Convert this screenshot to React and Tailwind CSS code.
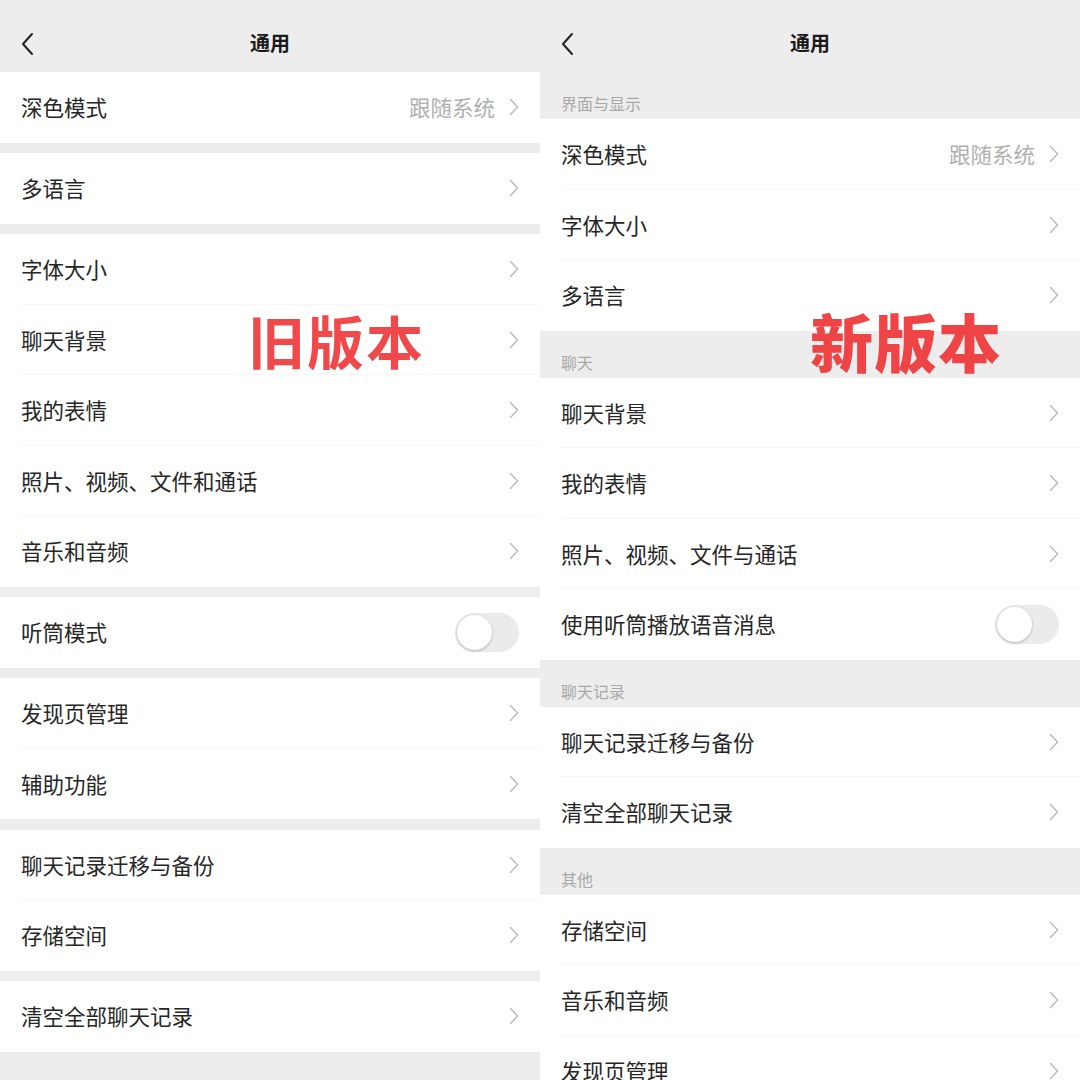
const font = { fontFamily: '"Noto Sans CJK SC", "Noto Sans", sans-serif' };

const Chevron = () => (
  <svg width="10" height="18" viewBox="0 0 10 18" fill="none">
    <polyline points="1.5,1.5 8.5,9 1.5,16.5" stroke="#bcbcbc" strokeWidth="1.5" strokeLinecap="round" strokeLinejoin="round" />
  </svg>
);

const Toggle = () => (
  <div className="w-[64px] h-[39px] rounded-full bg-[#ebebeb] p-[2px] flex items-center">
    <div className="w-[35px] h-[35px] rounded-full bg-white shadow-[0_1px_3px_rgba(0,0,0,0.25)]"></div>
  </div>
);

const Row = ({ label, value, toggle, last }) => (
  <div className="h-[70.5px] bg-white relative flex items-center justify-between pl-[21px] pr-[21px]">
    <span className="text-[21.5px] text-[#262626]">{label}</span>
    {toggle ? (
      <Toggle />
    ) : (
      <div className="flex items-center gap-[14px]">
        {value && <span className="text-[21.5px] text-[#b0b0b0]">{value}</span>}
        <Chevron />
      </div>
    )}
    {!last && <div className="absolute bottom-0 left-[21px] right-0 h-px bg-[#f7f7f7]"></div>}
  </div>
);

const Group = ({ rows }) => (
  <div className="flex flex-col">
    {rows.map((r, i) => (
      <Row key={i} {...r} last={i === rows.length - 1} />
    ))}
  </div>
);

const Header = () => (
  <div className="h-[72px] shrink-0 relative flex items-center justify-center">
    <svg className="absolute left-[20px] top-[32px]" width="15" height="24" viewBox="0 0 15 24" fill="none">
      <polyline points="12,2 3,12 12,22" stroke="#222" strokeWidth="2" strokeLinecap="round" strokeLinejoin="round" />
    </svg>
    <span className="text-[20px] font-bold text-[#1a1a1a] mt-[14px]">通用</span>
  </div>
);

const Section = ({ title }) => (
  <div className="h-[47px] flex items-end pl-[21px] pb-[6px]">
    <span className="text-[16px] leading-5 text-[#a8a8a8]">{title}</span>
  </div>
);

const oldGroups = [
  [{ label: "深色模式", value: "跟随系统" }],
  [{ label: "多语言" }],
  [
    { label: "字体大小" },
    { label: "聊天背景" },
    { label: "我的表情" },
    { label: "照片、视频、文件和通话" },
    { label: "音乐和音频" },
  ],
  [{ label: "听筒模式", toggle: true }],
  [{ label: "发现页管理" }, { label: "辅助功能" }],
  [{ label: "聊天记录迁移与备份" }, { label: "存储空间" }],
  [{ label: "清空全部聊天记录" }],
];

const newSections = [
  {
    title: "界面与显示",
    rows: [{ label: "深色模式", value: "跟随系统" }, { label: "字体大小" }, { label: "多语言" }],
  },
  {
    title: "聊天",
    rows: [
      { label: "聊天背景" },
      { label: "我的表情" },
      { label: "照片、视频、文件与通话" },
      { label: "使用听筒播放语音消息", toggle: true },
    ],
  },
  {
    title: "聊天记录",
    rows: [{ label: "聊天记录迁移与备份" }, { label: "清空全部聊天记录" }],
  },
  {
    title: "其他",
    rows: [{ label: "存储空间" }, { label: "音乐和音频" }, { label: "发现页管理" }],
  },
];

export default function App() {
  return (
    <div className="w-[1080px] h-[1080px] flex overflow-hidden bg-[#ededed]" style={font}>
      <div className="w-[540px] h-full relative flex flex-col gap-[10.5px] bg-[#ededed]">
        <div className="-mb-[10.5px]">
          <Header />
        </div>
        {oldGroups.map((g, i) => (
          <Group key={i} rows={g} />
        ))}
        <div className="absolute left-[248px] top-[311px] text-[57px] leading-none font-bold text-[#f0494b] tracking-[2px]">
          旧版本
        </div>
      </div>
      <div className="w-[540px] h-full relative flex flex-col bg-[#ededed]">
        <Header />
        {newSections.map((s, i) => (
          <div key={i} className="flex flex-col">
            <Section title={s.title} />
            <Group rows={s.rows} />
          </div>
        ))}
        <div className="absolute left-[270px] top-[308px] text-[63px] leading-none font-black text-[#ef4446] tracking-[1px]">
          新版本
        </div>
      </div>
    </div>
  );
}
